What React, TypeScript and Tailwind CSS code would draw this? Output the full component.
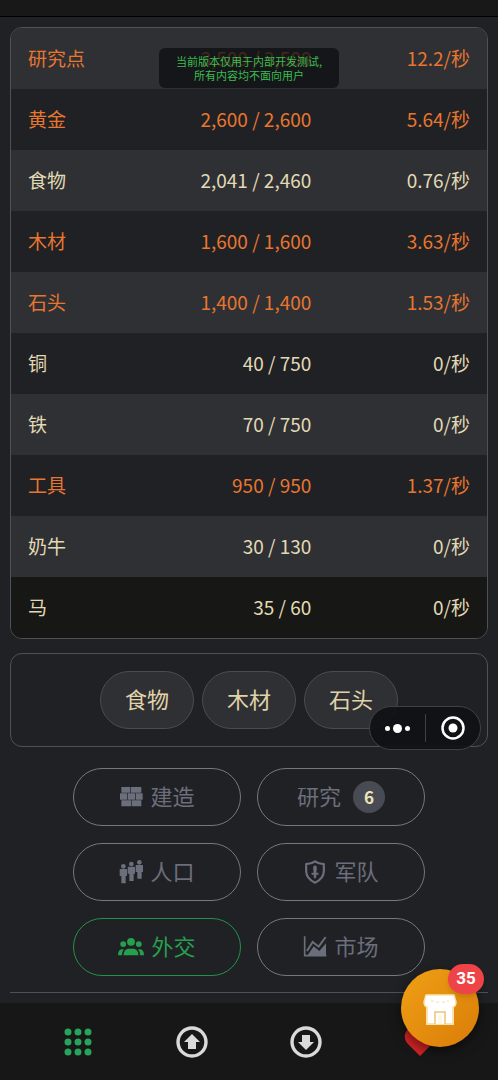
import clsx from "clsx";
import type { ReactNode } from "react";

type Resource = {
  name: string;
  amount: string;
  rate: string;
  full?: boolean;
};

const resources: Resource[] = [
  { name: "研究点", amount: "3,500 / 3,500", rate: "12.2/秒", full: true },
  { name: "黄金", amount: "2,600 / 2,600", rate: "5.64/秒", full: true },
  { name: "食物", amount: "2,041 / 2,460", rate: "0.76/秒" },
  { name: "木材", amount: "1,600 / 1,600", rate: "3.63/秒", full: true },
  { name: "石头", amount: "1,400 / 1,400", rate: "1.53/秒", full: true },
  { name: "铜", amount: "40 / 750", rate: "0/秒" },
  { name: "铁", amount: "70 / 750", rate: "0/秒" },
  { name: "工具", amount: "950 / 950", rate: "1.37/秒", full: true },
  { name: "奶牛", amount: "30 / 130", rate: "0/秒" },
  { name: "马", amount: "35 / 60", rate: "0/秒" },
];

function BricksIcon() {
  return (
    <svg viewBox="0 0 72 72" className="size-6" fill="currentColor" aria-hidden="true">
      <path d="M7 6h27v17H7zM36 6h31v17H36zM3 25h21v19H3zM26 25h23v19H26zM51 25h20v19H51zM7 46h29v18H7zM38 46h29v18H38z" />
    </svg>
  );
}

function PeopleIcon() {
  return (
    <svg viewBox="0 0 72 72" className="size-6" fill="currentColor" aria-hidden="true">
      <circle cx="13" cy="19" r="7" />
      <path d="M4 27h18q2 0 2 3v18h-4v22H7V48H2V30q0-3 2-3z" />
      <circle cx="37" cy="12" r="7" />
      <path d="M28 20h18q2 0 2 3v18h-4v22H31V41h-5V23q0-3 2-3z" />
      <circle cx="61" cy="7" r="7" />
      <path d="M52 15h18q2 0 2 3v18h-4v20H55V36h-5V18q0-3 2-3z" />
    </svg>
  );
}

function ShieldIcon() {
  return (
    <svg viewBox="0 0 72 76" className="size-6" fill="none" aria-hidden="true">
      <path
        d="M36 4c8 6 17 8 28 9v22c0 17-11 29-28 37C19 64 8 52 8 35V13c11-1 20-3 28-9z"
        stroke="currentColor"
        strokeWidth="7"
        strokeLinejoin="round"
      />
      <path d="M36 17q6 2 6 8l-2 15h7v7h-7v7l-4 6-4-6v-7h-7v-7h7l-2-15q0-6 6-8z" fill="currentColor" />
    </svg>
  );
}

function AllianceIcon() {
  return (
    <svg viewBox="0 0 80 72" className="h-6 w-[26px]" fill="currentColor" aria-hidden="true">
      <circle cx="40" cy="20" r="12" />
      <circle cx="16" cy="27" r="9" />
      <circle cx="64" cy="27" r="9" />
      <path d="M17 61q1-18 14-20h18q13 2 14 20z" />
      <path d="M0 61q0-16 12-18h6q-5 6-6 18zM80 61q0-16-12-18h-6q5 6 6 18z" />
    </svg>
  );
}

function ChartIcon() {
  return (
    <svg viewBox="0 0 72 72" className="size-6" aria-hidden="true">
      <path d="M13 62l19-28 17 14 20-23v38H12z" fill="currentColor" />
      <path d="M5 4v58h65" fill="none" stroke="currentColor" strokeWidth="5" />
      <path d="M12 48l17-27 18 14L68 6" fill="none" stroke="currentColor" strokeWidth="6" />
    </svg>
  );
}

function ArrowCircle({ down }: { down?: boolean }) {
  return (
    <svg viewBox="0 0 32 32" className={clsx("size-8", down && "rotate-180")} aria-hidden="true">
      <circle cx="16" cy="16" r="14" fill="none" stroke="#dadada" strokeWidth="3.4" />
      <path d="M16 8l8 8h-4v7h-8v-7H8z" fill="#dadada" />
    </svg>
  );
}

function StoreIcon() {
  return (
    <svg viewBox="0 0 36 34" className="h-[34px] w-9" aria-hidden="true">
      <path d="M5 10h26v21H5z" fill="#fff" stroke="#f7e3ae" strokeWidth="2" />
      <path
        d="M4 2h28l2 7q0 4-3 5H5q-3-1-3-5z"
        fill="#fff"
        stroke="#f7e3ae"
        strokeWidth="1.5"
        strokeLinejoin="round"
      />
      <path d="M6 12h24v4H6z" fill="#fff" />
      <path d="M9 8h3M14 9h3M20 9h3M25 8h2" stroke="#f3dfae" strokeWidth="1" />
      <path d="M13 31V19h10v12" fill="#fff" stroke="#efd495" strokeWidth="2" />
      <path d="M16 31v-9h4v9z" fill="#fdf6e3" />
    </svg>
  );
}

type TabProps = {
  label: string;
  icon?: ReactNode;
  badge?: number;
  active?: boolean;
};

const tabs: TabProps[] = [
  { label: "建造", icon: <BricksIcon /> },
  { label: "研究", badge: 6 },
  { label: "人口", icon: <PeopleIcon /> },
  { label: "军队", icon: <ShieldIcon /> },
  { label: "外交", icon: <AllianceIcon />, active: true },
  { label: "市场", icon: <ChartIcon /> },
];

function TabButton({ label, icon, badge, active }: TabProps) {
  return (
    <button
      type="button"
      className={clsx(
        "flex h-[58px] items-center justify-center rounded-full border text-[22px] leading-8",
        active ? "border-[#22924a] text-[#25a04d]" : "border-[#77787b] text-[#6b6e7b]"
      )}
    >
      {icon && <span className="mr-[7px]">{icon}</span>}
      <span className="pb-1">{label}</span>
      {badge && (
        <span className="ml-3 flex size-8 items-center justify-center rounded-full bg-[#484b54] text-[17px] font-bold text-[#ece5b8]">
          {badge}
        </span>
      )}
    </button>
  );
}

function ResourceTable() {
  return (
    <div className="overflow-hidden rounded-xl border border-[#505154]">
      <table className="w-full table-fixed text-[19px] leading-7">
        <tbody>
          {resources.map((item) => (
            <tr
              key={item.name}
              className={clsx(
                "h-[61px] odd:bg-[#2f3034] last:bg-[#171816]",
                item.full ? "text-[#e8762f]" : "text-[#e2dab4]"
              )}
            >
              <th scope="row" className="px-[17px] pb-0.5 text-left font-normal">
                {item.name}
              </th>
              <td className="px-[17px] pb-0.5 text-right whitespace-nowrap">{item.amount}</td>
              <td className="px-[17px] pb-0.5 text-right whitespace-nowrap">{item.rate}</td>
            </tr>
          ))}
        </tbody>
      </table>
    </div>
  );
}

// Mini program controls floating over the page
function Capsule() {
  return (
    <div className="absolute -bottom-1 right-1.5 flex h-11 w-[112px] items-center rounded-full border border-[#404145] bg-[#101114]/90">
      <button type="button" aria-label="更多" className="flex flex-1 items-center justify-center gap-[3px]">
        <span className="size-[5px] rounded-full bg-white" />
        <span className="size-[9px] rounded-full bg-white" />
        <span className="size-[5px] rounded-full bg-white" />
      </button>
      <span className="h-7 w-px bg-[#404145]" />
      <button type="button" aria-label="关闭" className="flex flex-1 justify-center">
        <svg viewBox="0 0 24 24" className="size-6" aria-hidden="true">
          <circle cx="12" cy="12" r="10.5" fill="none" stroke="#fff" strokeWidth="2.5" />
          <circle cx="12" cy="12" r="4.5" fill="#fff" />
        </svg>
      </button>
    </div>
  );
}

function BottomBar() {
  return (
    <footer className="relative h-[77px] bg-[#171717] px-[21px]">
      <nav className="grid h-full grid-cols-4 place-items-center">
        <button type="button" aria-label="菜单">
          <svg viewBox="0 0 28 28" className="size-7" fill="#27a35b" aria-hidden="true">
            {[4, 14, 24].map((y) =>
              [4, 14, 24].map((x) => <circle key={`${x}-${y}`} cx={x} cy={y} r="3.5" />)
            )}
          </svg>
        </button>
        <button type="button" aria-label="向上">
          <ArrowCircle />
        </button>
        <button type="button" aria-label="向下">
          <ArrowCircle down />
        </button>
        <button type="button" aria-label="收藏">
          <svg viewBox="0 0 34 32" className="h-8 w-[34px]" fill="#cf2324" aria-hidden="true">
            <path d="M17 30L4 17Q1 13 2 8q2-6 8-6 4 0 7 4 3-4 7-4 6 0 8 6 1 5-2 9z" />
          </svg>
        </button>
      </nav>
      <button
        type="button"
        aria-label="商店"
        className="absolute -top-[34px] right-[19px] flex size-[78px] items-center justify-center rounded-full bg-linear-to-br from-[#f0a015] to-[#d97c08] pt-1 shadow-[0_4px_12px_rgba(0,0,0,0.5)]"
      >
        <StoreIcon />
        <span className="absolute -top-[5px] -right-[5px] flex h-[30px] w-9 items-center justify-center rounded-full bg-[#ee4448] font-[Roboto] text-[17px] font-bold text-white shadow-md">
          35
        </span>
      </button>
    </footer>
  );
}

export default function App() {
  return (
    <div className="relative flex min-h-screen flex-col bg-[#202125] font-['Noto_Sans_CJK_SC',sans-serif]">
      <header className="h-[17px] border-b border-black bg-[#181818]" />

      <main className="flex-1 px-2.5 pt-2.5 pb-2.5">
        <ResourceTable />

        <section className="relative mt-3.5 flex justify-center gap-2 rounded-xl border border-[#505154] py-[17px]">
          {["食物", "木材", "石头"].map((label) => (
            <button
              key={label}
              type="button"
              className="h-[58px] rounded-full border border-[#4b4c50] bg-[#2f3034] px-6 pb-1 text-[22px] leading-8 text-[#e0d3a8]"
            >
              {label}
            </button>
          ))}
          <Capsule />
        </section>

        <div className="mx-auto mt-[21px] grid max-w-[352px] grid-cols-2 gap-x-4 gap-y-[17px]">
          {tabs.map((tab) => (
            <TabButton key={tab.label} {...tab} />
          ))}
        </div>

        <hr className="mt-4 border-[#505154]" />
      </main>

      <BottomBar />

      <div
        role="status"
        className="absolute top-12 left-1/2 w-[180px] -translate-x-1/2 rounded-md bg-[#0c0e11]/75 py-1.5 text-center text-[11px] leading-[14px] text-[#3cbd4e]"
      >
        当前版本仅用于内部开发测试,
        <br />
        所有内容均不面向用户
      </div>
    </div>
  );
}
